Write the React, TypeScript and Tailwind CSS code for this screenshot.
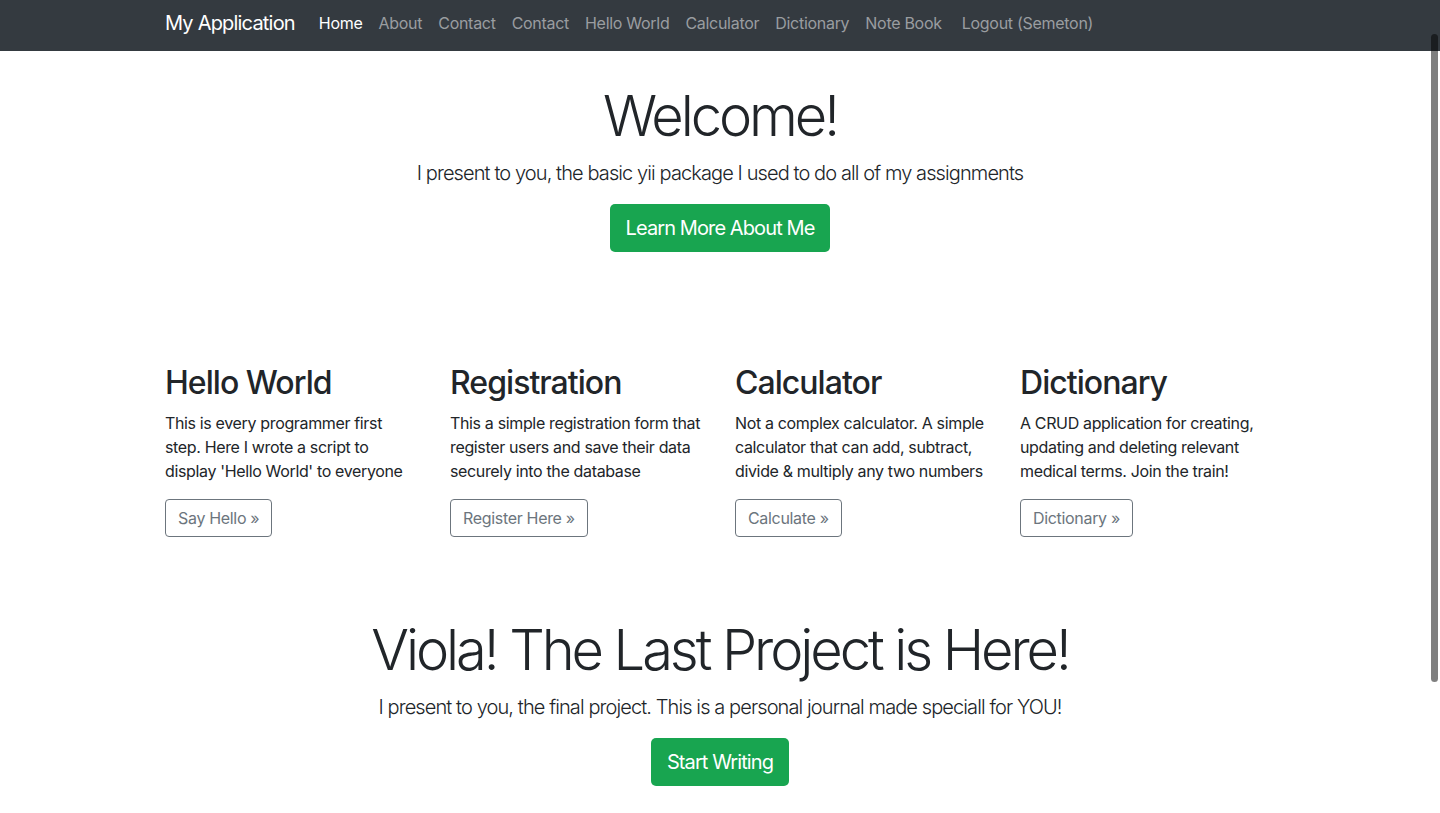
const navLinks = [
  { label: 'Home', active: true },
  { label: 'About' },
  { label: 'Contact' },
  { label: 'Contact' },
  { label: 'Hello World' },
  { label: 'Calculator' },
  { label: 'Dictionary' },
  { label: 'Note Book' },
]

const projects = [
  {
    title: 'Hello World',
    text: "This is every programmer first step. Here I wrote a script to display 'Hello World' to everyone",
    button: 'Say Hello »',
  },
  {
    title: 'Registration',
    text: 'This a simple registration form that register users and save their data securely into the database',
    button: 'Register Here »',
  },
  {
    title: 'Calculator',
    text: 'Not a complex calculator. A simple calculator that can add, subtract, divide & multiply any two numbers',
    button: 'Calculate »',
  },
  {
    title: 'Dictionary',
    text: 'A CRUD application for creating, updating and deleting relevant medical terms. Join the train!',
    button: 'Dictionary »',
  },
]

export default function App() {
  return (
    <div className="relative h-[813px] overflow-hidden bg-white font-['Inter','Liberation_Sans',sans-serif] text-[#212529]">
      <nav className="h-[51px] bg-[#343a40]">
        <div className="mx-auto flex h-full w-[1140px] items-center px-[15px] pb-[6px]">
          <a href="#" className="mr-4 text-[20px] leading-[30px] tracking-[-0.04em] text-white">
            My Application
          </a>
          <ul className="flex items-center">
            {navLinks.map((link, i) => (
              <li key={i}>
                <a
                  href="#"
                  className={
                    link.active
                      ? 'block px-2 text-[16px] leading-6 tracking-[-0.018em] text-white'
                      : 'block px-2 text-[16px] leading-6 tracking-[-0.018em] text-[#9a9da0]'
                  }
                >
                  {link.label}
                </a>
              </li>
            ))}
            <li>
              <button className="ml-1 px-2 text-[16px] leading-6 tracking-[-0.018em] text-[#9a9da0]">
                Logout (Semeton)
              </button>
            </li>
          </ul>
        </div>
      </nav>

      <main className="mx-auto w-[1140px] px-[15px]">
        <section className="pt-[32px] text-center">
          <h1 className="mb-2 text-[56px] font-light leading-[1.2] tracking-[-0.055em]">Welcome!</h1>
          <p className="mb-4 text-[20px] font-light leading-[30px] tracking-[-0.045em]">
            I present to you, the basic yii package I used to do all of my assignments
          </p>
          <a
            href="#"
            className="inline-block rounded-[5px] bg-[#18a550] px-4 py-[9px] text-[20px] leading-[30px] tracking-[-0.045em] text-white"
          >
            Learn More About Me
          </a>
        </section>

        <section className="mt-[112px] grid grid-cols-4 gap-[30px]">
          {projects.map((p) => (
            <div key={p.title}>
              <h2 className="mb-2 text-[32px] font-medium leading-[1.2] tracking-[-0.03em]">{p.title}</h2>
              <p className="mb-4 text-[16px] leading-6 tracking-[-0.022em]">{p.text}</p>
              <a
                href="#"
                className="inline-block rounded-[4px] border border-[#6c757d] px-3 py-[6px] text-[16px] leading-6 tracking-[-0.02em] text-[#6c757d]"
              >
                {p.button}
              </a>
            </div>
          ))}
        </section>

        <section className="mt-[80px] text-center">
          <h1 className="mb-2 text-[56px] font-light leading-[1.2] tracking-[-0.055em]">
            Viola! The Last Project is Here!
          </h1>
          <p className="mb-4 text-[20px] font-light leading-[30px] tracking-[-0.045em]">
            I present to you, the final project. This is a personal journal made speciall for YOU!
          </p>
          <a
            href="#"
            className="inline-block rounded-[5px] bg-[#18a550] px-4 py-[9px] text-[20px] leading-[30px] tracking-[-0.045em] text-white"
          >
            Start Writing
          </a>
        </section>
      </main>

      <div className="absolute right-[2px] top-[34px] h-[648px] w-[7px] rounded-full bg-black/50" />
    </div>
  )
}
